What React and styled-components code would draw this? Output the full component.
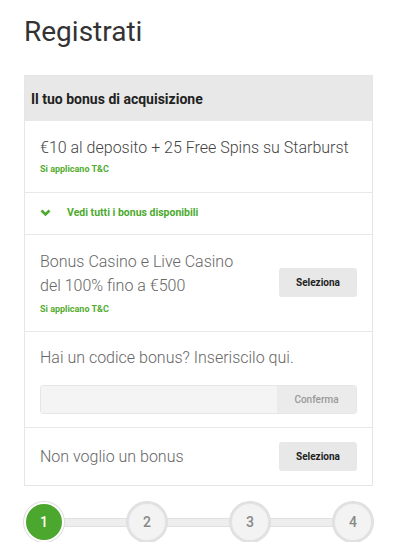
import React from 'react';
import styled, { createGlobalStyle } from 'styled-components';

const GlobalStyle = createGlobalStyle`
    body {
        margin : 0;
        background : #fff;
        font-family : Roboto, "Liberation Sans", Arial, sans-serif;
    }
`

const Chevron = () => (
    <svg width="11" height="8" viewBox="0 0 11 8">
        <path d="M1.5 1.5 L5.5 5.5 L9.5 1.5" fill="none" stroke="#4caa2e" strokeWidth="2.6" />
    </svg>
)

class App extends React.Component {
    render() {
        const steps = [1, 2, 3, 4];
        return (
            <Page>
                <GlobalStyle />
                <Title>Registrati</Title>
                <Card>
                    <CardHeader>Il tuo bonus di acquisizione</CardHeader>
                    <Row pad="16px 15px 18px">
                        <Offer>€10 al deposito + 25 Free Spins su Starburst</Offer>
                        <Terms gap="5px">Si applicano T&amp;C</Terms>
                    </Row>
                    <Row pad="12px 15px 13px">
                        <ShowAll>
                            <Chevron />
                            <span>Vedi tutti i bonus disponibili</span>
                        </ShowAll>
                    </Row>
                    <Row pad="15px 15px 17px">
                        <OptionLine>
                            <div>
                                <OptionText>Bonus Casino e Live Casino<br />del 100% fino a €500</OptionText>
                                <Terms gap="6px">Si applicano T&amp;C</Terms>
                            </div>
                            <GreyButton>Seleziona</GreyButton>
                        </OptionLine>
                    </Row>
                    <Row pad="14px 15px 13px">
                        <OptionText>Hai un codice bonus? Inseriscilo qui.</OptionText>
                        <CodeBox>
                            <CodeInput />
                            <ConfirmButton>Conferma</ConfirmButton>
                        </CodeBox>
                    </Row>
                    <Row pad="14px 15px 14px">
                        <OptionLine>
                            <OptionText>Non voglio un bonus</OptionText>
                            <GreyButton>Seleziona</GreyButton>
                        </OptionLine>
                    </Row>
                </Card>
                <Stepper>
                    <StepTrack />
                    {steps.map(n => (
                        <Step key={n} active={n === 1}>{n}</Step>
                    ))}
                </Stepper>
            </Page>
        );
    }
}

const Page = styled.div`
    padding : 15px 27px 0 24px;
`

const Title = styled.h1`
    margin : 0 0 26px;
    font-size : 28px;
    font-weight : 400;
    line-height : 34px;
    color : #333;
`

const Card = styled.div`
    border : 1px solid #e6e6e6;
`

const CardHeader = styled.div`
    background : #e8e8e8;
    height : 45px;
    padding : 0 6px;
    display : flex;
    align-items : center;
    font-size : 14px;
    font-weight : 700;
    color : #222;
`

const Row = styled.div`
    padding : ${p => p.pad};
    border-top : 1px solid #e8e8e8;
    &:nth-child(2) { border-top : none; }
`

const Offer = styled.div`
    font-size : 16px;
    font-weight : 300;
    line-height : 22px;
    color : #444;
`

const Terms = styled.div`
    margin-top : ${p => p.gap || '4px'};
    font-size : 9px;
    font-weight : 700;
    color : #53ad30;
`

const ShowAll = styled.div`
    display : flex;
    align-items : center;
    gap : 16px;
    font-size : 10.5px;
    font-weight : 700;
    color : #4caa2e;
    line-height : 16px;
`

const OptionLine = styled.div`
    display : flex;
    align-items : center;
    justify-content : space-between;
`

const OptionText = styled.div`
    font-size : 16px;
    font-weight : 300;
    line-height : 24px;
    color : #666;
`

const GreyButton = styled.button`
    width : 78px;
    height : 29px;
    border : none;
    border-radius : 3px;
    background : #e8e8e8;
    font-family : inherit;
    font-size : 10px;
    font-weight : 700;
    color : #222;
    padding : 0;
`

const CodeBox = styled.div`
    display : flex;
    margin-top : 15px;
    height : 27px;
    border : 1px solid #e6e6e6;
    border-radius : 3px;
    overflow : hidden;
`

const CodeInput = styled.div`
    flex : 1;
    background : #f4f4f4;
`

const ConfirmButton = styled.div`
    width : 79px;
    display : flex;
    align-items : center;
    justify-content : center;
    background : #ebebeb;
    font-size : 10px;
    font-weight : 500;
    color : #999;
`

const Stepper = styled.div`
    position : relative;
    display : flex;
    justify-content : space-between;
    margin-top : 16px;
`

const StepTrack = styled.div`
    position : absolute;
    left : 20px;
    right : 20px;
    top : 16px;
    height : 7px;
    background : #eeeeee;
    border : 1px solid #e0e0e0;
`

const Step = styled.div`
    position : relative;
    width : 36px;
    height : 36px;
    border-radius : 50%;
    border : 2px solid ${p => p.active ? '#fff' : '#e2e2e2'};
    box-shadow : 0 0 0 1px #dedede;
    background : ${p => p.active ? '#4ca72f' : '#f3f3f3'};
    display : flex;
    align-items : center;
    justify-content : center;
    font-size : 14px;
    font-weight : 500;
    color : ${p => p.active ? '#fff' : '#888'};
`

export default App;
